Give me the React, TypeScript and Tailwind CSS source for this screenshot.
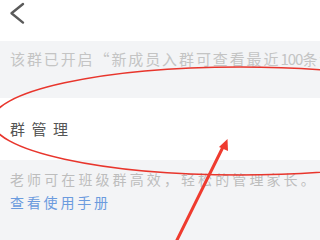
import React from "react";

export default function App() {
  const cjk = { fontFamily: '"Noto Sans CJK SC", "Noto Sans", sans-serif' };
  return (
    <div className="relative w-[320px] h-[240px] overflow-hidden bg-[#f3f4f6]" style={cjk}>
      <div className="h-[41px] bg-white">
        <svg width="36" height="30" viewBox="0 0 36 30" className="block">
          <path d="M23 4 L11.5 13.2 L23 22.6" fill="none" stroke="#5a5a5a" strokeWidth="2.4" strokeLinecap="round" strokeLinejoin="round" />
        </svg>
      </div>
      <div className="h-[57px] pl-[10px] pt-[7px] whitespace-nowrap overflow-hidden text-[15px] leading-[22px] tracking-[1.9px] text-[#c4c4c4]">
        该群已开启“新成员入群可查看最近<span className="tracking-[-1px]">100</span>条消息”
      </div>
      <div className="h-[62px] bg-white flex items-center pl-[10px] text-[15px] tracking-[6.5px] text-[#555555]">
        群管理
      </div>
      <div className="pl-[10px] pt-[8px] whitespace-nowrap text-[14px] tracking-[3.1px]">
        <div className="leading-[22px] text-[#bdbdbd]">老师可在班级群高效，轻松的管理家长。</div>
        <div className="leading-[24px] text-[#6b9bde] tracking-[2.8px]">查看使用手册</div>
      </div>
      <svg className="absolute left-0 top-0" width="320" height="240" viewBox="0 0 320 240">
        <ellipse cx="240" cy="121" rx="248" ry="54" fill="none" stroke="#e8352c" strokeWidth="1.6" />
        <line x1="176" y1="242" x2="223" y2="147" stroke="#ef3b2f" strokeWidth="3" strokeLinecap="round" />
        <polygon points="227.5,139 219,147 228,151" fill="#ef3b2f" />
      </svg>
    </div>
  );
}
